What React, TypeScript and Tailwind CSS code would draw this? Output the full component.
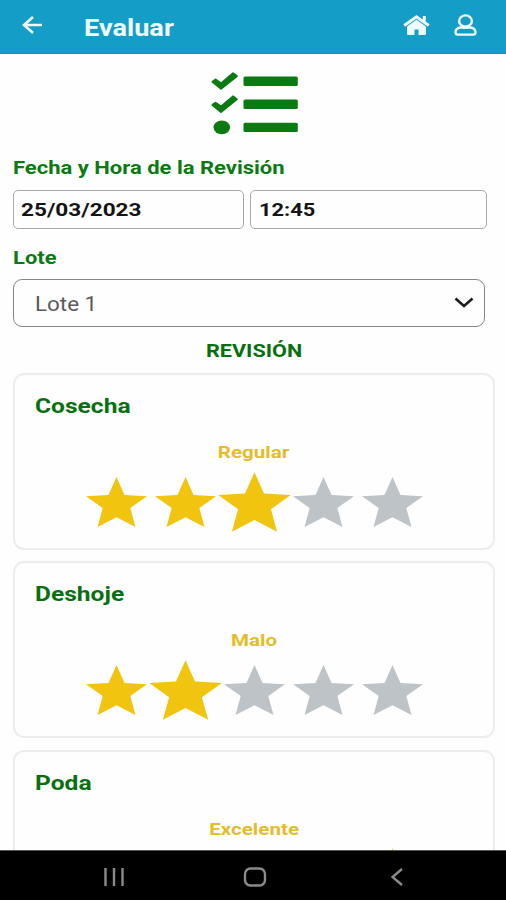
import { useState } from "react";
import { clsx } from "clsx";

const LABELS = ["Pésimo", "Malo", "Regular", "Bueno", "Excelente"];

const REVIEWS = [
  { name: "Cosecha", rating: 3 },
  { name: "Deshoje", rating: 2 },
  { name: "Poda", rating: 5 },
];

function Star({ filled, current }: { filled: boolean; current: boolean }) {
  return (
    <svg
      viewBox="0 0 61 50"
      className={clsx(
        "h-[50px] w-[61px] overflow-visible",
        filled ? "fill-[#f1c40f]" : "fill-[#bdc3c7]",
        current && "scale-[1.19]"
      )}
    >
      <path d="M30.5 0 38.5 17.9 61 19.2 44.3 31 49.5 50 30.5 40.2 11.5 50 16.7 31 0 19.2 22.5 17.9Z" />
    </svg>
  );
}

function ReviewCard({ name, initial }: { name: string; initial: number }) {
  const [rating, setRating] = useState(initial);

  return (
    <section className="h-[177px] shrink-0 rounded-[11px] border-2 border-[#ebedee] pt-[17px]">
      <h2 className="ml-5 w-fit origin-left scale-x-[1.17] text-[21px] leading-7 font-bold text-[#087010]">
        {name}
      </h2>
      <p className="mt-[22px] text-center text-[17px] leading-5 font-bold text-[#e3bd2c]">
        <span className="inline-block scale-x-[1.21]">{LABELS[rating - 1]}</span>
      </p>
      <div className="mt-[14.5px] flex justify-center gap-2">
        {LABELS.map((label, i) => (
          <button key={label} type="button" aria-label={label} onClick={() => setRating(i + 1)}>
            <Star filled={i < rating} current={i === rating - 1} />
          </button>
        ))}
      </div>
    </section>
  );
}

function Header() {
  return (
    <header className="flex h-[54px] shrink-0 items-start border-b border-[#0d93bb] bg-[#149dc6] text-[#effbff]">
      <svg viewBox="0 0 22 20" className="mt-[15px] ml-[22px] h-5 w-[22px] fill-none stroke-current stroke-[2.6]">
        <path d="M20 10H2M11 2 2 10l9 8" />
      </svg>
      <h1 className="mt-[14px] ml-[40px] origin-left scale-x-[1.18] text-[23px] leading-[30px] font-bold">
        Evaluar
      </h1>
      <svg viewBox="0 0 28 20" className="mt-[15px] ml-auto h-5 w-7 overflow-visible fill-current">
        <path
          d="M1.2 10.400 13.500 1.800l12.300 8.600M21.300 6.500V1"
          className="fill-none stroke-current stroke-[3]"
        />
        <path d="M13.500 4.700 23 11.400v7.300c0 .9-.5 1.300-1.400 1.300H15.500v-5.500h-4V20H5.400c-.9 0-1.400-.4-1.400-1.300v-7.300Z" />
      </svg>
      <svg viewBox="0 0 24 24" className="mt-[13px] mr-[28px] ml-[23px] h-6 w-6 fill-none stroke-current stroke-[2.4]">
        <ellipse cx="11.500" cy="8" rx="6.400" ry="5.600" />
        <path d="M7.500 14.300c-3.500.4-6 2-6 4.900 0 1.600.8 2.400 2.400 2.400h15.200c1.600 0 2.400-.8 2.400-2.400 0-2.900-2.500-4.500-6-4.900-2.500.6-5.500.6-8 0Z" />
      </svg>
    </header>
  );
}

function TasksIcon() {
  return (
    <svg viewBox="0 0 87 63" className="mx-auto mt-[17px] h-[63px] w-[87px] shrink-0 overflow-visible fill-[#0b7a12]">
      <g stroke="#0b7a12" strokeWidth="2" strokeLinejoin="round">
        <path d="M1.500 10.800 4.600 8.600 10 12.400 22 2.300 25.800 5.100 10 17.800Z" />
        <path d="M1.500 33.900 4.600 31.700 10 35.500 22 25.400 25.800 28.200 10 40.900Z" />
      </g>
      <ellipse cx="10.800" cy="56.300" rx="8.300" ry="6.900" />
      <rect x="32.500" y="5.500" width="54.300" height="9.400" rx="1.500" />
      <rect x="32.500" y="28.600" width="54.300" height="9.400" rx="1.500" />
      <rect x="32.500" y="51.700" width="54.300" height="9.400" rx="1.500" />
    </svg>
  );
}

function NavBar() {
  return (
    <nav className="flex h-[50px] shrink-0 items-center border-t border-[#555] bg-black text-[#8b8b8b]">
      <svg viewBox="0 0 20 18" className="mt-0.5 ml-[104px] h-[18px] w-5 fill-none stroke-current stroke-[2.4]">
        <path d="M1.500 0v18M10 0v18M18.500 0v18" />
      </svg>
      <svg viewBox="0 0 24 20" className="mt-0.5 ml-[119px] h-5 w-6 fill-none stroke-current stroke-[2.4]">
        <rect x="2" y="1.500" width="20" height="17" rx="5.500" />
      </svg>
      <svg viewBox="0 0 12 18" className="mt-0.5 ml-[124px] h-[18px] w-3 fill-none stroke-current stroke-[2.4]">
        <path d="M11 1 1.500 9l9.500 8" />
      </svg>
    </nav>
  );
}

export default function App() {
  return (
    <div className="flex h-[900px] w-[506px] flex-col bg-[#fefefe] font-[Roboto,sans-serif]">
      <Header />
      <main className="flex min-h-0 flex-1 flex-col overflow-hidden pr-[11px] pl-[13px]">
        <TasksIcon />
        <p className="mt-[22px] w-fit origin-left scale-x-[1.222] text-lg leading-6 font-bold text-[#0b7a12]">
          Fecha y Hora de la Revisión
        </p>
        <div className="mt-[10px] flex shrink-0 gap-1.5 text-[19px] leading-[38px] font-bold text-[#141414]">
          <div className="h-[39px] w-[231px] rounded-[5px] border-[1.5px] border-[#a9a9a9] pl-[7px]">
            <span className="inline-block origin-left scale-x-[1.19]">25/03/2023</span>
          </div>
          <div className="h-[39px] w-[237px] rounded-[5px] border-[1.5px] border-[#a9a9a9] pl-2">
            <span className="inline-block origin-left scale-x-[1.15]">12:45</span>
          </div>
        </div>
        <p className="mt-[17px] w-fit origin-left scale-x-[1.22] text-lg leading-6 font-bold text-[#0b7a12]">Lote</p>
        <div className="mt-[9px] flex h-12 w-[472px] shrink-0 items-center justify-between rounded-[9px] border-[1.5px] border-[#858585] pr-[10px] pl-[21px]">
          <span className="mt-0.5 origin-left scale-x-[1.12] text-xl text-[#5a5a5a]">Lote 1</span>
          <svg viewBox="0 0 20 12" className="h-3 w-5 fill-none stroke-[#1c1c1c] stroke-[2.6]">
            <path d="M1.500 1.500 10 9l8.500-7.500" />
          </svg>
        </div>
        <h2 className="mt-3 text-center text-lg leading-6 font-bold text-[#087010]">
          <span className="inline-block scale-x-[1.2]">REVISIÓN</span>
        </h2>
        <div className="mt-[10px] flex flex-col gap-[11.4px]">
          {REVIEWS.map((r) => (
            <ReviewCard key={r.name} name={r.name} initial={r.rating} />
          ))}
        </div>
      </main>
      <NavBar />
    </div>
  );
}
